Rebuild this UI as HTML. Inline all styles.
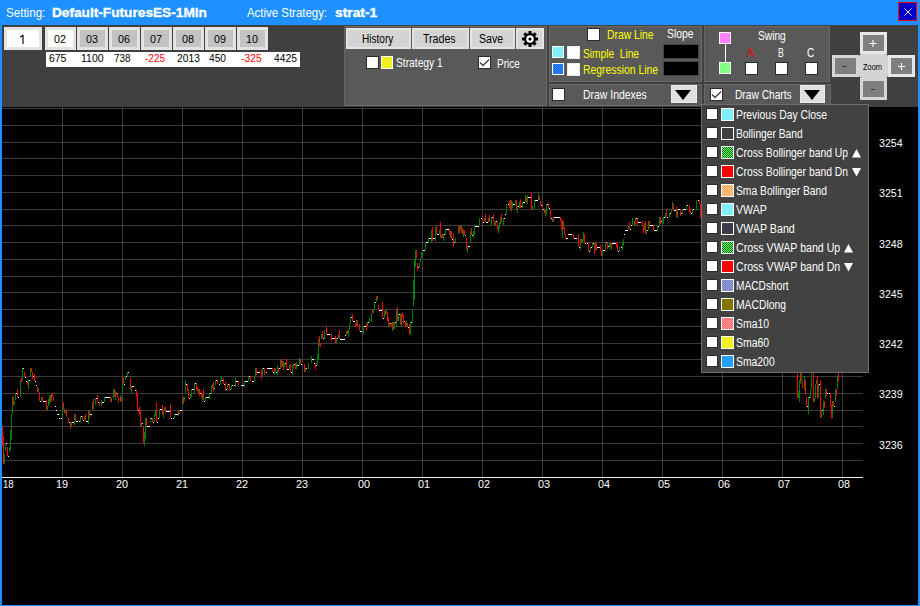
<!DOCTYPE html>
<html><head><meta charset="utf-8">
<style>
*{box-sizing:border-box}
html,body{margin:0;padding:0}
body{width:920px;height:606px;overflow:hidden;position:relative;background:#1e90ff;font-family:"Liberation Sans",sans-serif;}
.a{position:absolute}
.t{position:absolute;white-space:nowrap;line-height:1}
#hdr{position:absolute;left:2px;top:25px;width:916px;height:82px;background:#404040}
#chart{position:absolute;left:2px;top:107px;width:916px;height:498px;background:#000}
.nb{position:absolute;top:27px;height:23px;width:31px;background:#c3c3c3;border:3px solid #e3e3e3;color:#000;font-size:12px;text-align:center;line-height:17px}
.pn{position:absolute;background:#595959;border:1px solid #686868}
.btn{position:absolute;background:#d4d4d4;border:2px solid #e4e4e4;color:#000;font-size:13px;text-align:center;line-height:17px}
.cb{position:absolute;width:13px;height:13px;background:#fff;border:1px solid #2a2a2a}
.sw{position:absolute;width:13px;height:13px;border:1px solid #fff}
.dd{position:absolute;background:#e0e0e0;border:1px solid #ececec}
.dd:after{content:"";position:absolute;left:2.8px;top:3.9px;border-left:8.7px solid transparent;border-right:8.7px solid transparent;border-top:10.3px solid #000}
.xl{position:absolute;top:479px;width:30px;text-align:center;color:#fff;font-size:11px;line-height:11px}
.yl{position:absolute;left:879px;color:#fff;font-size:11px;line-height:14px}
.row{position:absolute;left:0;height:19px;width:168px}
.row .cb{left:4px;top:3px;width:12px;height:12px}
.row .sw{left:19px;top:3px;width:13px;height:13px}
.row .t{left:35px;top:6px;color:#fff;font-size:11.5px}
.zb{position:absolute;background:#7f7f7f;border:3px solid #e6e6e6;color:#fff;font-size:12px;text-align:center;line-height:15px}
</style></head><body>
<!-- title -->
<div class="a" style="left:898px;top:2px;width:19px;height:19px;background:#0000c8;border:1px solid #ff0000">
<svg width="17" height="17" style="position:absolute;left:0;top:0"><path d="M5.5 5.5L12.5 12.5M12.5 5.5L5.5 12.5" stroke="#fff" stroke-width="0.9"/></svg></div>

<div id="hdr"></div>
<div id="chart"></div>
<svg class="a" style="left:0;top:0" width="920" height="606"><rect x="2" y="108" width="861" height="1" fill="#505050" fill-opacity="0.75"/><rect x="2" y="125" width="861" height="1" fill="#505050" fill-opacity="0.75"/><rect x="2" y="142" width="861" height="1" fill="#505050" fill-opacity="0.75"/><rect x="2" y="158" width="861" height="1" fill="#505050" fill-opacity="0.75"/><rect x="2" y="175" width="861" height="1" fill="#505050" fill-opacity="0.75"/><rect x="2" y="192" width="861" height="1" fill="#505050" fill-opacity="0.75"/><rect x="2" y="209" width="861" height="1" fill="#505050" fill-opacity="0.75"/><rect x="2" y="225" width="861" height="1" fill="#505050" fill-opacity="0.75"/><rect x="2" y="242" width="861" height="1" fill="#505050" fill-opacity="0.75"/><rect x="2" y="259" width="861" height="1" fill="#505050" fill-opacity="0.75"/><rect x="2" y="276" width="861" height="1" fill="#505050" fill-opacity="0.75"/><rect x="2" y="292" width="861" height="1" fill="#505050" fill-opacity="0.75"/><rect x="2" y="309" width="861" height="1" fill="#505050" fill-opacity="0.75"/><rect x="2" y="326" width="861" height="1" fill="#505050" fill-opacity="0.75"/><rect x="2" y="343" width="861" height="1" fill="#505050" fill-opacity="0.75"/><rect x="2" y="359" width="861" height="1" fill="#505050" fill-opacity="0.75"/><rect x="2" y="376" width="861" height="1" fill="#505050" fill-opacity="0.75"/><rect x="2" y="393" width="861" height="1" fill="#505050" fill-opacity="0.75"/><rect x="2" y="410" width="861" height="1" fill="#505050" fill-opacity="0.75"/><rect x="2" y="426" width="861" height="1" fill="#505050" fill-opacity="0.75"/><rect x="2" y="443" width="861" height="1" fill="#505050" fill-opacity="0.75"/><rect x="2" y="460" width="861" height="1" fill="#505050" fill-opacity="0.75"/><rect x="62" y="107" width="1" height="370" fill="#505050" fill-opacity="0.75"/><rect x="122" y="107" width="1" height="370" fill="#505050" fill-opacity="0.75"/><rect x="182" y="107" width="1" height="370" fill="#505050" fill-opacity="0.75"/><rect x="242" y="107" width="1" height="370" fill="#505050" fill-opacity="0.75"/><rect x="302" y="107" width="1" height="370" fill="#505050" fill-opacity="0.75"/><rect x="362" y="107" width="1" height="370" fill="#505050" fill-opacity="0.75"/><rect x="422" y="107" width="1" height="370" fill="#505050" fill-opacity="0.75"/><rect x="482" y="107" width="1" height="370" fill="#505050" fill-opacity="0.75"/><rect x="542" y="107" width="1" height="370" fill="#505050" fill-opacity="0.75"/><rect x="602" y="107" width="1" height="370" fill="#505050" fill-opacity="0.75"/><rect x="662" y="107" width="1" height="370" fill="#505050" fill-opacity="0.75"/><rect x="722" y="107" width="1" height="370" fill="#505050" fill-opacity="0.75"/><rect x="782" y="107" width="1" height="370" fill="#505050" fill-opacity="0.75"/><rect x="842" y="107" width="1" height="370" fill="#505050" fill-opacity="0.75"/><rect x="2" y="477" width="861" height="1" fill="#f0f0f0"/><rect x="2" y="426" width="1" height="20" fill="#ff0000"/><rect x="3" y="436" width="1" height="28" fill="#ff0000"/><rect x="4" y="454" width="1" height="10" fill="#008000"/><rect x="5" y="443" width="1" height="8" fill="#008000"/><rect x="6" y="443" width="1" height="1" fill="#ffffff"/><rect x="7" y="447" width="1" height="9" fill="#ff0000"/><rect x="8" y="456" width="1" height="1" fill="#ffffff"/><rect x="9" y="447" width="1" height="5" fill="#008000"/><rect x="10" y="430" width="1" height="20" fill="#008000"/><rect x="11" y="414" width="1" height="26" fill="#008000"/><rect x="12" y="397" width="1" height="17" fill="#008000"/><rect x="13" y="397" width="1" height="8" fill="#ff0000"/><rect x="14" y="401" width="1" height="4" fill="#008000"/><rect x="15" y="393" width="1" height="7" fill="#008000"/><rect x="16" y="393" width="1" height="1" fill="#ffffff"/><rect x="17" y="389" width="1" height="8" fill="#ff0000"/><rect x="18" y="397" width="1" height="1" fill="#ffffff"/><rect x="20" y="380" width="1" height="17" fill="#008000"/><rect x="21" y="378" width="1" height="4" fill="#ff0000"/><rect x="22" y="368" width="1" height="12" fill="#008000"/><rect x="23" y="368" width="1" height="1" fill="#ffffff"/><rect x="24" y="372" width="1" height="5" fill="#ff0000"/><rect x="25" y="377" width="1" height="1" fill="#ffffff"/><rect x="26" y="381" width="1" height="1" fill="#ffffff"/><rect x="27" y="381" width="1" height="4" fill="#ff0000"/><rect x="28" y="380" width="1" height="9" fill="#008000"/><rect x="29" y="380" width="1" height="1" fill="#ffffff"/><rect x="30" y="368" width="1" height="8" fill="#008000"/><rect x="31" y="368" width="1" height="4" fill="#ff0000"/><rect x="32" y="372" width="1" height="7" fill="#ff0000"/><rect x="33" y="376" width="1" height="1" fill="#ffffff"/><rect x="34" y="374" width="1" height="7" fill="#ff0000"/><rect x="35" y="381" width="1" height="1" fill="#ffffff"/><rect x="36" y="385" width="1" height="1" fill="#ffffff"/><rect x="37" y="387" width="1" height="5" fill="#ff0000"/><rect x="38" y="388" width="1" height="4" fill="#008000"/><rect x="39" y="392" width="1" height="9" fill="#ff0000"/><rect x="40" y="401" width="1" height="1" fill="#ffffff"/><rect x="41" y="397" width="1" height="4" fill="#008000"/><rect x="42" y="397" width="1" height="4" fill="#ff0000"/><rect x="43" y="401" width="1" height="1" fill="#ffffff"/><rect x="44" y="401" width="1" height="1" fill="#ffffff"/><rect x="45" y="401" width="1" height="1" fill="#ffffff"/><rect x="46" y="400" width="1" height="10" fill="#ff0000"/><rect x="47" y="406" width="1" height="4" fill="#008000"/><rect x="48" y="399" width="1" height="7" fill="#008000"/><rect x="49" y="395" width="1" height="9" fill="#008000"/><rect x="50" y="395" width="1" height="7" fill="#ff0000"/><rect x="51" y="393" width="1" height="8" fill="#008000"/><rect x="52" y="393" width="1" height="4" fill="#ff0000"/><rect x="53" y="397" width="1" height="4" fill="#ff0000"/><rect x="55" y="406" width="1" height="1" fill="#ffffff"/><rect x="56" y="410" width="1" height="1" fill="#ffffff"/><rect x="57" y="414" width="1" height="1" fill="#ffffff"/><rect x="58" y="414" width="1" height="1" fill="#ffffff"/><rect x="59" y="418" width="1" height="1" fill="#ffffff"/><rect x="61" y="418" width="1" height="1" fill="#ffffff"/><rect x="62" y="405" width="1" height="13" fill="#008000"/><rect x="63" y="402" width="1" height="7" fill="#ff0000"/><rect x="64" y="409" width="1" height="4" fill="#ff0000"/><rect x="65" y="410" width="1" height="4" fill="#008000"/><rect x="66" y="410" width="1" height="7" fill="#ff0000"/><rect x="68" y="418" width="1" height="4" fill="#ff0000"/><rect x="69" y="422" width="1" height="1" fill="#ffffff"/><rect x="70" y="422" width="1" height="7" fill="#ff0000"/><rect x="71" y="422" width="1" height="4" fill="#008000"/><rect x="72" y="422" width="1" height="1" fill="#ffffff"/><rect x="73" y="422" width="1" height="1" fill="#ffffff"/><rect x="74" y="414" width="1" height="11" fill="#008000"/><rect x="75" y="414" width="1" height="7" fill="#ff0000"/><rect x="76" y="421" width="1" height="1" fill="#ffffff"/><rect x="77" y="421" width="1" height="1" fill="#ffffff"/><rect x="79" y="421" width="1" height="1" fill="#ffffff"/><rect x="80" y="416" width="1" height="6" fill="#008000"/><rect x="81" y="416" width="1" height="1" fill="#ffffff"/><rect x="82" y="416" width="1" height="4" fill="#ff0000"/><rect x="83" y="420" width="1" height="1" fill="#ffffff"/><rect x="84" y="416" width="1" height="4" fill="#008000"/><rect x="85" y="414" width="1" height="7" fill="#ff0000"/><rect x="86" y="421" width="1" height="1" fill="#ffffff"/><rect x="87" y="421" width="1" height="1" fill="#ffffff"/><rect x="88" y="410" width="1" height="14" fill="#008000"/><rect x="89" y="410" width="1" height="8" fill="#ff0000"/><rect x="90" y="414" width="1" height="1" fill="#ffffff"/><rect x="91" y="414" width="1" height="1" fill="#ffffff"/><rect x="92" y="402" width="1" height="8" fill="#008000"/><rect x="93" y="399" width="1" height="10" fill="#ff0000"/><rect x="95" y="398" width="1" height="7" fill="#008000"/><rect x="96" y="398" width="1" height="1" fill="#ffffff"/><rect x="97" y="395" width="1" height="7" fill="#ff0000"/><rect x="98" y="402" width="1" height="1" fill="#ffffff"/><rect x="99" y="402" width="1" height="4" fill="#ff0000"/><rect x="101" y="400" width="1" height="6" fill="#008000"/><rect x="102" y="402" width="1" height="1" fill="#ffffff"/><rect x="103" y="402" width="1" height="1" fill="#ffffff"/><rect x="104" y="397" width="1" height="5" fill="#008000"/><rect x="105" y="397" width="1" height="1" fill="#ffffff"/><rect x="106" y="397" width="1" height="1" fill="#ffffff"/><rect x="107" y="397" width="1" height="1" fill="#ffffff"/><rect x="108" y="397" width="1" height="1" fill="#ffffff"/><rect x="109" y="397" width="1" height="1" fill="#ffffff"/><rect x="110" y="397" width="1" height="5" fill="#ff0000"/><rect x="111" y="398" width="1" height="4" fill="#008000"/><rect x="113" y="389" width="1" height="9" fill="#008000"/><rect x="114" y="389" width="1" height="8" fill="#ff0000"/><rect x="115" y="391" width="1" height="9" fill="#008000"/><rect x="116" y="393" width="1" height="1" fill="#ffffff"/><rect x="117" y="393" width="1" height="4" fill="#ff0000"/><rect x="118" y="397" width="1" height="5" fill="#ff0000"/><rect x="120" y="395" width="1" height="7" fill="#008000"/><rect x="121" y="397" width="1" height="4" fill="#ff0000"/><rect x="122" y="380" width="1" height="13" fill="#008000"/><rect x="123" y="377" width="1" height="7" fill="#ff0000"/><rect x="124" y="384" width="1" height="1" fill="#ffffff"/><rect x="125" y="376" width="1" height="4" fill="#008000"/><rect x="126" y="376" width="1" height="1" fill="#ffffff"/><rect x="127" y="372" width="1" height="4" fill="#008000"/><rect x="128" y="372" width="1" height="1" fill="#ffffff"/><rect x="130" y="378" width="1" height="12" fill="#ff0000"/><rect x="131" y="386" width="1" height="7" fill="#008000"/><rect x="132" y="386" width="1" height="1" fill="#ffffff"/><rect x="133" y="386" width="1" height="1" fill="#ffffff"/><rect x="135" y="390" width="1" height="1" fill="#ffffff"/><rect x="136" y="390" width="1" height="7" fill="#ff0000"/><rect x="137" y="394" width="1" height="16" fill="#ff0000"/><rect x="138" y="410" width="1" height="1" fill="#ffffff"/><rect x="139" y="407" width="1" height="7" fill="#ff0000"/><rect x="140" y="410" width="1" height="17" fill="#ff0000"/><rect x="141" y="423" width="1" height="4" fill="#008000"/><rect x="142" y="423" width="1" height="1" fill="#ffffff"/><rect x="143" y="427" width="1" height="16" fill="#ff0000"/><rect x="144" y="432" width="1" height="14" fill="#008000"/><rect x="145" y="418" width="1" height="21" fill="#008000"/><rect x="146" y="418" width="1" height="8" fill="#ff0000"/><rect x="147" y="426" width="1" height="1" fill="#ffffff"/><rect x="148" y="426" width="1" height="1" fill="#ffffff"/><rect x="149" y="426" width="1" height="1" fill="#ffffff"/><rect x="150" y="418" width="1" height="4" fill="#008000"/><rect x="151" y="418" width="1" height="1" fill="#ffffff"/><rect x="152" y="418" width="1" height="4" fill="#ff0000"/><rect x="153" y="422" width="1" height="1" fill="#ffffff"/><rect x="154" y="414" width="1" height="8" fill="#008000"/><rect x="155" y="410" width="1" height="6" fill="#008000"/><rect x="156" y="402" width="1" height="20" fill="#ff0000"/><rect x="157" y="422" width="1" height="1" fill="#ffffff"/><rect x="158" y="418" width="1" height="1" fill="#ffffff"/><rect x="159" y="409" width="1" height="9" fill="#008000"/><rect x="160" y="409" width="1" height="1" fill="#ffffff"/><rect x="161" y="409" width="1" height="1" fill="#ffffff"/><rect x="162" y="405" width="1" height="10" fill="#ff0000"/><rect x="163" y="411" width="1" height="7" fill="#008000"/><rect x="164" y="407" width="1" height="4" fill="#008000"/><rect x="165" y="407" width="1" height="6" fill="#ff0000"/><rect x="166" y="411" width="1" height="1" fill="#ffffff"/><rect x="167" y="411" width="1" height="1" fill="#ffffff"/><rect x="168" y="411" width="1" height="1" fill="#ffffff"/><rect x="169" y="411" width="1" height="1" fill="#ffffff"/><rect x="170" y="404" width="1" height="14" fill="#ff0000"/><rect x="171" y="418" width="1" height="1" fill="#ffffff"/><rect x="173" y="418" width="1" height="1" fill="#ffffff"/><rect x="174" y="414" width="1" height="4" fill="#008000"/><rect x="175" y="414" width="1" height="1" fill="#ffffff"/><rect x="176" y="414" width="1" height="1" fill="#ffffff"/><rect x="177" y="414" width="1" height="1" fill="#ffffff"/><rect x="178" y="410" width="1" height="6" fill="#008000"/><rect x="179" y="410" width="1" height="4" fill="#ff0000"/><rect x="180" y="410" width="1" height="1" fill="#ffffff"/><rect x="181" y="410" width="1" height="1" fill="#ffffff"/><rect x="182" y="397" width="1" height="9" fill="#008000"/><rect x="183" y="397" width="1" height="7" fill="#ff0000"/><rect x="184" y="397" width="1" height="4" fill="#008000"/><rect x="185" y="380" width="1" height="13" fill="#008000"/><rect x="186" y="384" width="1" height="1" fill="#ffffff"/><rect x="187" y="384" width="1" height="7" fill="#ff0000"/><rect x="188" y="389" width="1" height="9" fill="#ff0000"/><rect x="189" y="398" width="1" height="1" fill="#ffffff"/><rect x="190" y="394" width="1" height="4" fill="#008000"/><rect x="191" y="389" width="1" height="8" fill="#008000"/><rect x="192" y="389" width="1" height="1" fill="#ffffff"/><rect x="193" y="389" width="1" height="1" fill="#ffffff"/><rect x="194" y="383" width="1" height="10" fill="#008000"/><rect x="195" y="383" width="1" height="1" fill="#ffffff"/><rect x="196" y="383" width="1" height="7" fill="#ff0000"/><rect x="197" y="387" width="1" height="4" fill="#ff0000"/><rect x="198" y="389" width="1" height="4" fill="#008000"/><rect x="199" y="389" width="1" height="7" fill="#ff0000"/><rect x="200" y="393" width="1" height="1" fill="#ffffff"/><rect x="201" y="391" width="1" height="6" fill="#ff0000"/><rect x="202" y="393" width="1" height="7" fill="#008000"/><rect x="203" y="389" width="1" height="12" fill="#ff0000"/><rect x="204" y="401" width="1" height="1" fill="#ffffff"/><rect x="205" y="397" width="1" height="4" fill="#008000"/><rect x="206" y="397" width="1" height="1" fill="#ffffff"/><rect x="207" y="397" width="1" height="1" fill="#ffffff"/><rect x="208" y="397" width="1" height="1" fill="#ffffff"/><rect x="209" y="393" width="1" height="6" fill="#008000"/><rect x="210" y="393" width="1" height="1" fill="#ffffff"/><rect x="211" y="386" width="1" height="7" fill="#008000"/><rect x="212" y="384" width="1" height="4" fill="#008000"/><rect x="213" y="382" width="1" height="9" fill="#ff0000"/><rect x="214" y="388" width="1" height="1" fill="#ffffff"/><rect x="215" y="380" width="1" height="5" fill="#008000"/><rect x="216" y="380" width="1" height="1" fill="#ffffff"/><rect x="217" y="380" width="1" height="4" fill="#ff0000"/><rect x="219" y="384" width="1" height="1" fill="#ffffff"/><rect x="220" y="380" width="1" height="4" fill="#008000"/><rect x="221" y="376" width="1" height="5" fill="#008000"/><rect x="222" y="380" width="1" height="1" fill="#ffffff"/><rect x="223" y="378" width="1" height="6" fill="#ff0000"/><rect x="224" y="384" width="1" height="1" fill="#ffffff"/><rect x="225" y="382" width="1" height="9" fill="#ff0000"/><rect x="226" y="389" width="1" height="1" fill="#ffffff"/><rect x="227" y="384" width="1" height="5" fill="#008000"/><rect x="228" y="384" width="1" height="1" fill="#ffffff"/><rect x="229" y="384" width="1" height="5" fill="#ff0000"/><rect x="230" y="389" width="1" height="1" fill="#ffffff"/><rect x="231" y="385" width="1" height="4" fill="#008000"/><rect x="232" y="385" width="1" height="1" fill="#ffffff"/><rect x="234" y="385" width="1" height="1" fill="#ffffff"/><rect x="235" y="378" width="1" height="9" fill="#008000"/><rect x="236" y="381" width="1" height="1" fill="#ffffff"/><rect x="237" y="381" width="1" height="1" fill="#ffffff"/><rect x="238" y="381" width="1" height="4" fill="#ff0000"/><rect x="241" y="385" width="1" height="1" fill="#ffffff"/><rect x="242" y="385" width="1" height="1" fill="#ffffff"/><rect x="243" y="385" width="1" height="1" fill="#ffffff"/><rect x="244" y="381" width="1" height="6" fill="#008000"/><rect x="245" y="381" width="1" height="1" fill="#ffffff"/><rect x="246" y="381" width="1" height="1" fill="#ffffff"/><rect x="247" y="381" width="1" height="1" fill="#ffffff"/><rect x="248" y="376" width="1" height="5" fill="#008000"/><rect x="249" y="376" width="1" height="1" fill="#ffffff"/><rect x="250" y="376" width="1" height="5" fill="#ff0000"/><rect x="252" y="381" width="1" height="1" fill="#ffffff"/><rect x="253" y="381" width="1" height="1" fill="#ffffff"/><rect x="254" y="376" width="1" height="5" fill="#008000"/><rect x="255" y="368" width="1" height="8" fill="#008000"/><rect x="256" y="368" width="1" height="7" fill="#ff0000"/><rect x="257" y="372" width="1" height="1" fill="#ffffff"/><rect x="258" y="372" width="1" height="1" fill="#ffffff"/><rect x="259" y="372" width="1" height="1" fill="#ffffff"/><rect x="261" y="370" width="1" height="9" fill="#ff0000"/><rect x="262" y="368" width="1" height="8" fill="#008000"/><rect x="263" y="368" width="1" height="1" fill="#ffffff"/><rect x="264" y="368" width="1" height="7" fill="#ff0000"/><rect x="266" y="372" width="1" height="1" fill="#ffffff"/><rect x="267" y="368" width="1" height="1" fill="#ffffff"/><rect x="268" y="368" width="1" height="1" fill="#ffffff"/><rect x="269" y="368" width="1" height="1" fill="#ffffff"/><rect x="270" y="368" width="1" height="1" fill="#ffffff"/><rect x="271" y="368" width="1" height="1" fill="#ffffff"/><rect x="272" y="368" width="1" height="4" fill="#ff0000"/><rect x="273" y="372" width="1" height="1" fill="#ffffff"/><rect x="274" y="368" width="1" height="7" fill="#008000"/><rect x="275" y="368" width="1" height="4" fill="#ff0000"/><rect x="276" y="372" width="1" height="1" fill="#ffffff"/><rect x="277" y="365" width="1" height="10" fill="#008000"/><rect x="278" y="368" width="1" height="4" fill="#ff0000"/><rect x="279" y="368" width="1" height="1" fill="#ffffff"/><rect x="280" y="359" width="1" height="10" fill="#008000"/><rect x="281" y="359" width="1" height="8" fill="#ff0000"/><rect x="282" y="361" width="1" height="6" fill="#008000"/><rect x="283" y="361" width="1" height="9" fill="#ff0000"/><rect x="284" y="363" width="1" height="4" fill="#008000"/><rect x="285" y="363" width="1" height="1" fill="#ffffff"/><rect x="286" y="359" width="1" height="10" fill="#ff0000"/><rect x="287" y="369" width="1" height="1" fill="#ffffff"/><rect x="288" y="369" width="1" height="1" fill="#ffffff"/><rect x="289" y="365" width="1" height="4" fill="#008000"/><rect x="290" y="364" width="1" height="8" fill="#ff0000"/><rect x="291" y="372" width="1" height="1" fill="#ffffff"/><rect x="292" y="365" width="1" height="10" fill="#008000"/><rect x="293" y="364" width="1" height="4" fill="#008000"/><rect x="294" y="364" width="1" height="1" fill="#ffffff"/><rect x="295" y="363" width="1" height="6" fill="#ff0000"/><rect x="296" y="362" width="1" height="7" fill="#008000"/><rect x="297" y="365" width="1" height="1" fill="#ffffff"/><rect x="298" y="365" width="1" height="1" fill="#ffffff"/><rect x="299" y="358" width="1" height="7" fill="#008000"/><rect x="300" y="359" width="1" height="5" fill="#ff0000"/><rect x="301" y="364" width="1" height="1" fill="#ffffff"/><rect x="304" y="364" width="1" height="8" fill="#ff0000"/><rect x="305" y="368" width="1" height="4" fill="#008000"/><rect x="306" y="368" width="1" height="1" fill="#ffffff"/><rect x="308" y="363" width="1" height="6" fill="#008000"/><rect x="311" y="356" width="1" height="7" fill="#008000"/><rect x="312" y="359" width="1" height="1" fill="#ffffff"/><rect x="313" y="359" width="1" height="1" fill="#ffffff"/><rect x="314" y="363" width="1" height="1" fill="#ffffff"/><rect x="315" y="363" width="1" height="6" fill="#ff0000"/><rect x="316" y="365" width="1" height="1" fill="#ffffff"/><rect x="317" y="354" width="1" height="11" fill="#008000"/><rect x="318" y="339" width="1" height="21" fill="#008000"/><rect x="319" y="336" width="1" height="10" fill="#ff0000"/><rect x="320" y="343" width="1" height="4" fill="#ff0000"/><rect x="321" y="334" width="1" height="5" fill="#008000"/><rect x="322" y="331" width="1" height="7" fill="#ff0000"/><rect x="323" y="338" width="1" height="1" fill="#ffffff"/><rect x="324" y="330" width="1" height="9" fill="#008000"/><rect x="326" y="327" width="1" height="7" fill="#ff0000"/><rect x="327" y="334" width="1" height="1" fill="#ffffff"/><rect x="328" y="334" width="1" height="1" fill="#ffffff"/><rect x="329" y="334" width="1" height="1" fill="#ffffff"/><rect x="331" y="334" width="1" height="7" fill="#ff0000"/><rect x="332" y="338" width="1" height="1" fill="#ffffff"/><rect x="333" y="338" width="1" height="1" fill="#ffffff"/><rect x="334" y="338" width="1" height="1" fill="#ffffff"/><rect x="335" y="336" width="1" height="7" fill="#ff0000"/><rect x="336" y="338" width="1" height="5" fill="#008000"/><rect x="337" y="338" width="1" height="1" fill="#ffffff"/><rect x="338" y="334" width="1" height="4" fill="#008000"/><rect x="339" y="330" width="1" height="9" fill="#ff0000"/><rect x="340" y="339" width="1" height="1" fill="#ffffff"/><rect x="341" y="339" width="1" height="1" fill="#ffffff"/><rect x="342" y="339" width="1" height="1" fill="#ffffff"/><rect x="343" y="339" width="1" height="1" fill="#ffffff"/><rect x="344" y="339" width="1" height="1" fill="#ffffff"/><rect x="345" y="335" width="1" height="1" fill="#ffffff"/><rect x="346" y="331" width="1" height="4" fill="#008000"/><rect x="347" y="330" width="1" height="4" fill="#ff0000"/><rect x="348" y="330" width="1" height="7" fill="#008000"/><rect x="349" y="323" width="1" height="7" fill="#008000"/><rect x="350" y="317" width="1" height="6" fill="#008000"/><rect x="351" y="317" width="1" height="1" fill="#ffffff"/><rect x="352" y="314" width="1" height="7" fill="#ff0000"/><rect x="353" y="321" width="1" height="1" fill="#ffffff"/><rect x="354" y="321" width="1" height="1" fill="#ffffff"/><rect x="355" y="323" width="1" height="4" fill="#ff0000"/><rect x="356" y="320" width="1" height="7" fill="#008000"/><rect x="357" y="320" width="1" height="7" fill="#ff0000"/><rect x="359" y="324" width="1" height="7" fill="#ff0000"/><rect x="360" y="331" width="1" height="1" fill="#ffffff"/><rect x="361" y="331" width="1" height="1" fill="#ffffff"/><rect x="363" y="326" width="1" height="8" fill="#008000"/><rect x="364" y="326" width="1" height="1" fill="#ffffff"/><rect x="365" y="326" width="1" height="1" fill="#ffffff"/><rect x="366" y="323" width="1" height="7" fill="#ff0000"/><rect x="367" y="322" width="1" height="5" fill="#008000"/><rect x="368" y="322" width="1" height="1" fill="#ffffff"/><rect x="369" y="318" width="1" height="4" fill="#008000"/><rect x="371" y="313" width="1" height="9" fill="#008000"/><rect x="372" y="309" width="1" height="4" fill="#008000"/><rect x="373" y="309" width="1" height="4" fill="#ff0000"/><rect x="374" y="302" width="1" height="8" fill="#008000"/><rect x="375" y="302" width="1" height="1" fill="#ffffff"/><rect x="376" y="296" width="1" height="6" fill="#008000"/><rect x="377" y="296" width="1" height="4" fill="#ff0000"/><rect x="378" y="305" width="1" height="5" fill="#ff0000"/><rect x="379" y="310" width="1" height="1" fill="#ffffff"/><rect x="380" y="310" width="1" height="1" fill="#ffffff"/><rect x="381" y="310" width="1" height="1" fill="#ffffff"/><rect x="382" y="302" width="1" height="16" fill="#ff0000"/><rect x="383" y="318" width="1" height="1" fill="#ffffff"/><rect x="384" y="311" width="1" height="7" fill="#008000"/><rect x="385" y="310" width="1" height="5" fill="#008000"/><rect x="386" y="310" width="1" height="4" fill="#ff0000"/><rect x="387" y="312" width="1" height="9" fill="#ff0000"/><rect x="388" y="317" width="1" height="10" fill="#ff0000"/><rect x="389" y="323" width="1" height="4" fill="#008000"/><rect x="390" y="323" width="1" height="1" fill="#ffffff"/><rect x="391" y="323" width="1" height="4" fill="#ff0000"/><rect x="392" y="322" width="1" height="9" fill="#008000"/><rect x="393" y="322" width="1" height="7" fill="#ff0000"/><rect x="394" y="322" width="1" height="7" fill="#008000"/><rect x="395" y="322" width="1" height="1" fill="#ffffff"/><rect x="396" y="310" width="1" height="17" fill="#008000"/><rect x="397" y="307" width="1" height="14" fill="#ff0000"/><rect x="398" y="314" width="1" height="7" fill="#008000"/><rect x="399" y="314" width="1" height="1" fill="#ffffff"/><rect x="400" y="314" width="1" height="11" fill="#ff0000"/><rect x="401" y="313" width="1" height="14" fill="#008000"/><rect x="402" y="313" width="1" height="4" fill="#ff0000"/><rect x="403" y="315" width="1" height="9" fill="#ff0000"/><rect x="404" y="321" width="1" height="1" fill="#ffffff"/><rect x="405" y="322" width="1" height="5" fill="#ff0000"/><rect x="406" y="320" width="1" height="7" fill="#008000"/><rect x="407" y="323" width="1" height="4" fill="#ff0000"/><rect x="408" y="327" width="1" height="1" fill="#ffffff"/><rect x="409" y="324" width="1" height="10" fill="#ff0000"/><rect x="410" y="322" width="1" height="13" fill="#008000"/><rect x="411" y="322" width="1" height="1" fill="#ffffff"/><rect x="412" y="310" width="1" height="13" fill="#008000"/><rect x="413" y="280" width="1" height="26" fill="#008000"/><rect x="414" y="259" width="1" height="41" fill="#008000"/><rect x="415" y="250" width="1" height="17" fill="#008000"/><rect x="416" y="250" width="1" height="8" fill="#ff0000"/><rect x="417" y="263" width="1" height="8" fill="#ff0000"/><rect x="418" y="267" width="1" height="1" fill="#ffffff"/><rect x="419" y="263" width="1" height="4" fill="#008000"/><rect x="420" y="258" width="1" height="5" fill="#008000"/><rect x="421" y="252" width="1" height="6" fill="#008000"/><rect x="422" y="250" width="1" height="5" fill="#008000"/><rect x="423" y="250" width="1" height="1" fill="#ffffff"/><rect x="424" y="250" width="1" height="1" fill="#ffffff"/><rect x="425" y="242" width="1" height="8" fill="#008000"/><rect x="426" y="242" width="1" height="1" fill="#ffffff"/><rect x="427" y="242" width="1" height="1" fill="#ffffff"/><rect x="428" y="238" width="1" height="5" fill="#008000"/><rect x="429" y="238" width="1" height="1" fill="#ffffff"/><rect x="430" y="238" width="1" height="1" fill="#ffffff"/><rect x="431" y="230" width="1" height="12" fill="#008000"/><rect x="432" y="227" width="1" height="14" fill="#ff0000"/><rect x="433" y="238" width="1" height="1" fill="#ffffff"/><rect x="434" y="238" width="1" height="1" fill="#ffffff"/><rect x="435" y="227" width="1" height="14" fill="#008000"/><rect x="436" y="226" width="1" height="8" fill="#ff0000"/><rect x="437" y="234" width="1" height="1" fill="#ffffff"/><rect x="438" y="234" width="1" height="1" fill="#ffffff"/><rect x="439" y="230" width="1" height="4" fill="#008000"/><rect x="440" y="222" width="1" height="16" fill="#ff0000"/><rect x="441" y="234" width="1" height="4" fill="#008000"/><rect x="442" y="234" width="1" height="4" fill="#ff0000"/><rect x="443" y="234" width="1" height="7" fill="#008000"/><rect x="444" y="234" width="1" height="1" fill="#ffffff"/><rect x="445" y="229" width="1" height="6" fill="#008000"/><rect x="446" y="229" width="1" height="1" fill="#ffffff"/><rect x="447" y="229" width="1" height="1" fill="#ffffff"/><rect x="448" y="229" width="1" height="1" fill="#ffffff"/><rect x="449" y="229" width="1" height="6" fill="#ff0000"/><rect x="450" y="231" width="1" height="7" fill="#008000"/><rect x="451" y="231" width="1" height="8" fill="#ff0000"/><rect x="452" y="239" width="1" height="1" fill="#ffffff"/><rect x="453" y="234" width="1" height="12" fill="#ff0000"/><rect x="454" y="242" width="1" height="1" fill="#ffffff"/><rect x="455" y="238" width="1" height="4" fill="#008000"/><rect x="458" y="226" width="1" height="8" fill="#008000"/><rect x="459" y="226" width="1" height="7" fill="#ff0000"/><rect x="460" y="226" width="1" height="4" fill="#008000"/><rect x="461" y="226" width="1" height="7" fill="#ff0000"/><rect x="462" y="228" width="1" height="6" fill="#ff0000"/><rect x="463" y="230" width="1" height="7" fill="#008000"/><rect x="464" y="230" width="1" height="5" fill="#ff0000"/><rect x="465" y="235" width="1" height="1" fill="#ffffff"/><rect x="466" y="238" width="1" height="12" fill="#ff0000"/><rect x="467" y="246" width="1" height="7" fill="#008000"/><rect x="468" y="246" width="1" height="1" fill="#ffffff"/><rect x="469" y="246" width="1" height="1" fill="#ffffff"/><rect x="470" y="231" width="1" height="11" fill="#008000"/><rect x="471" y="228" width="1" height="7" fill="#ff0000"/><rect x="472" y="235" width="1" height="1" fill="#ffffff"/><rect x="473" y="231" width="1" height="7" fill="#008000"/><rect x="474" y="226" width="1" height="9" fill="#008000"/><rect x="475" y="226" width="1" height="1" fill="#ffffff"/><rect x="476" y="226" width="1" height="1" fill="#ffffff"/><rect x="477" y="226" width="1" height="1" fill="#ffffff"/><rect x="478" y="226" width="1" height="1" fill="#ffffff"/><rect x="479" y="218" width="1" height="8" fill="#008000"/><rect x="481" y="218" width="1" height="1" fill="#ffffff"/><rect x="482" y="218" width="1" height="4" fill="#ff0000"/><rect x="483" y="222" width="1" height="1" fill="#ffffff"/><rect x="484" y="218" width="1" height="4" fill="#008000"/><rect x="485" y="214" width="1" height="8" fill="#ff0000"/><rect x="486" y="222" width="1" height="1" fill="#ffffff"/><rect x="487" y="222" width="1" height="1" fill="#ffffff"/><rect x="488" y="218" width="1" height="4" fill="#008000"/><rect x="489" y="215" width="1" height="7" fill="#ff0000"/><rect x="491" y="217" width="1" height="9" fill="#008000"/><rect x="492" y="217" width="1" height="1" fill="#ffffff"/><rect x="493" y="214" width="1" height="7" fill="#ff0000"/><rect x="494" y="221" width="1" height="4" fill="#ff0000"/><rect x="495" y="221" width="1" height="4" fill="#008000"/><rect x="496" y="221" width="1" height="1" fill="#ffffff"/><rect x="497" y="222" width="1" height="8" fill="#ff0000"/><rect x="498" y="226" width="1" height="7" fill="#008000"/><rect x="499" y="222" width="1" height="6" fill="#008000"/><rect x="500" y="217" width="1" height="7" fill="#008000"/><rect x="501" y="214" width="1" height="8" fill="#ff0000"/><rect x="503" y="218" width="1" height="7" fill="#008000"/><rect x="504" y="218" width="1" height="1" fill="#ffffff"/><rect x="505" y="214" width="1" height="1" fill="#ffffff"/><rect x="506" y="204" width="1" height="10" fill="#008000"/><rect x="508" y="204" width="1" height="1" fill="#ffffff"/><rect x="509" y="201" width="1" height="7" fill="#ff0000"/><rect x="510" y="200" width="1" height="10" fill="#008000"/><rect x="511" y="200" width="1" height="11" fill="#ff0000"/><rect x="512" y="202" width="1" height="6" fill="#008000"/><rect x="513" y="204" width="1" height="1" fill="#ffffff"/><rect x="514" y="204" width="1" height="1" fill="#ffffff"/><rect x="515" y="200" width="1" height="4" fill="#008000"/><rect x="516" y="200" width="1" height="10" fill="#ff0000"/><rect x="517" y="206" width="1" height="7" fill="#008000"/><rect x="518" y="206" width="1" height="1" fill="#ffffff"/><rect x="519" y="202" width="1" height="6" fill="#008000"/><rect x="520" y="199" width="1" height="9" fill="#ff0000"/><rect x="521" y="206" width="1" height="1" fill="#ffffff"/><rect x="522" y="202" width="1" height="6" fill="#008000"/><rect x="523" y="202" width="1" height="1" fill="#ffffff"/><rect x="524" y="202" width="1" height="1" fill="#ffffff"/><rect x="525" y="195" width="1" height="7" fill="#008000"/><rect x="526" y="197" width="1" height="5" fill="#ff0000"/><rect x="527" y="195" width="1" height="9" fill="#008000"/><rect x="528" y="197" width="1" height="1" fill="#ffffff"/><rect x="529" y="197" width="1" height="1" fill="#ffffff"/><rect x="530" y="197" width="1" height="1" fill="#ffffff"/><rect x="531" y="192" width="1" height="18" fill="#ff0000"/><rect x="532" y="206" width="1" height="4" fill="#008000"/><rect x="534" y="200" width="1" height="10" fill="#008000"/><rect x="535" y="200" width="1" height="1" fill="#ffffff"/><rect x="536" y="200" width="1" height="1" fill="#ffffff"/><rect x="537" y="200" width="1" height="1" fill="#ffffff"/><rect x="538" y="193" width="1" height="7" fill="#008000"/><rect x="539" y="196" width="1" height="4" fill="#ff0000"/><rect x="540" y="201" width="1" height="4" fill="#ff0000"/><rect x="541" y="205" width="1" height="1" fill="#ffffff"/><rect x="542" y="205" width="1" height="4" fill="#ff0000"/><rect x="543" y="209" width="1" height="1" fill="#ffffff"/><rect x="544" y="209" width="1" height="4" fill="#ff0000"/><rect x="545" y="209" width="1" height="7" fill="#008000"/><rect x="546" y="204" width="1" height="10" fill="#008000"/><rect x="547" y="204" width="1" height="1" fill="#ffffff"/><rect x="548" y="204" width="1" height="4" fill="#ff0000"/><rect x="549" y="208" width="1" height="1" fill="#ffffff"/><rect x="550" y="210" width="1" height="8" fill="#ff0000"/><rect x="551" y="218" width="1" height="1" fill="#ffffff"/><rect x="552" y="218" width="1" height="4" fill="#ff0000"/><rect x="553" y="217" width="1" height="5" fill="#008000"/><rect x="554" y="217" width="1" height="1" fill="#ffffff"/><rect x="555" y="217" width="1" height="1" fill="#ffffff"/><rect x="556" y="217" width="1" height="1" fill="#ffffff"/><rect x="557" y="217" width="1" height="1" fill="#ffffff"/><rect x="558" y="217" width="1" height="1" fill="#ffffff"/><rect x="559" y="217" width="1" height="1" fill="#ffffff"/><rect x="560" y="217" width="1" height="4" fill="#ff0000"/><rect x="561" y="219" width="1" height="11" fill="#ff0000"/><rect x="562" y="221" width="1" height="17" fill="#008000"/><rect x="563" y="221" width="1" height="8" fill="#ff0000"/><rect x="564" y="227" width="1" height="7" fill="#ff0000"/><rect x="565" y="234" width="1" height="4" fill="#ff0000"/><rect x="566" y="238" width="1" height="1" fill="#ffffff"/><rect x="567" y="238" width="1" height="1" fill="#ffffff"/><rect x="568" y="234" width="1" height="1" fill="#ffffff"/><rect x="569" y="234" width="1" height="1" fill="#ffffff"/><rect x="570" y="234" width="1" height="1" fill="#ffffff"/><rect x="571" y="234" width="1" height="1" fill="#ffffff"/><rect x="573" y="234" width="1" height="4" fill="#ff0000"/><rect x="574" y="238" width="1" height="1" fill="#ffffff"/><rect x="575" y="238" width="1" height="1" fill="#ffffff"/><rect x="576" y="238" width="1" height="1" fill="#ffffff"/><rect x="578" y="234" width="1" height="13" fill="#ff0000"/><rect x="579" y="247" width="1" height="1" fill="#ffffff"/><rect x="580" y="239" width="1" height="11" fill="#008000"/><rect x="581" y="239" width="1" height="4" fill="#ff0000"/><rect x="582" y="239" width="1" height="4" fill="#008000"/><rect x="583" y="232" width="1" height="9" fill="#008000"/><rect x="584" y="234" width="1" height="9" fill="#ff0000"/><rect x="585" y="243" width="1" height="1" fill="#ffffff"/><rect x="587" y="243" width="1" height="1" fill="#ffffff"/><rect x="588" y="243" width="1" height="8" fill="#ff0000"/><rect x="589" y="251" width="1" height="1" fill="#ffffff"/><rect x="590" y="247" width="1" height="4" fill="#008000"/><rect x="591" y="247" width="1" height="1" fill="#ffffff"/><rect x="592" y="243" width="1" height="4" fill="#008000"/><rect x="593" y="243" width="1" height="1" fill="#ffffff"/><rect x="594" y="243" width="1" height="11" fill="#ff0000"/><rect x="595" y="243" width="1" height="8" fill="#008000"/><rect x="596" y="243" width="1" height="7" fill="#ff0000"/><rect x="597" y="247" width="1" height="1" fill="#ffffff"/><rect x="598" y="247" width="1" height="1" fill="#ffffff"/><rect x="599" y="247" width="1" height="1" fill="#ffffff"/><rect x="600" y="245" width="1" height="6" fill="#ff0000"/><rect x="601" y="251" width="1" height="5" fill="#ff0000"/><rect x="602" y="250" width="1" height="6" fill="#008000"/><rect x="603" y="250" width="1" height="1" fill="#ffffff"/><rect x="604" y="250" width="1" height="1" fill="#ffffff"/><rect x="605" y="242" width="1" height="8" fill="#008000"/><rect x="606" y="242" width="1" height="1" fill="#ffffff"/><rect x="607" y="242" width="1" height="7" fill="#ff0000"/><rect x="608" y="246" width="1" height="1" fill="#ffffff"/><rect x="609" y="242" width="1" height="7" fill="#008000"/><rect x="610" y="242" width="1" height="5" fill="#ff0000"/><rect x="611" y="243" width="1" height="7" fill="#008000"/><rect x="612" y="243" width="1" height="1" fill="#ffffff"/><rect x="613" y="243" width="1" height="1" fill="#ffffff"/><rect x="614" y="243" width="1" height="1" fill="#ffffff"/><rect x="615" y="243" width="1" height="1" fill="#ffffff"/><rect x="616" y="243" width="1" height="4" fill="#ff0000"/><rect x="617" y="244" width="1" height="7" fill="#ff0000"/><rect x="618" y="251" width="1" height="1" fill="#ffffff"/><rect x="619" y="247" width="1" height="4" fill="#008000"/><rect x="621" y="247" width="1" height="1" fill="#ffffff"/><rect x="622" y="243" width="1" height="7" fill="#008000"/><rect x="623" y="239" width="1" height="6" fill="#008000"/><rect x="624" y="234" width="1" height="1" fill="#ffffff"/><rect x="625" y="230" width="1" height="1" fill="#ffffff"/><rect x="626" y="230" width="1" height="1" fill="#ffffff"/><rect x="627" y="230" width="1" height="1" fill="#ffffff"/><rect x="628" y="225" width="1" height="5" fill="#008000"/><rect x="629" y="222" width="1" height="7" fill="#ff0000"/><rect x="630" y="229" width="1" height="1" fill="#ffffff"/><rect x="631" y="225" width="1" height="1" fill="#ffffff"/><rect x="632" y="218" width="1" height="7" fill="#008000"/><rect x="634" y="221" width="1" height="4" fill="#ff0000"/><rect x="635" y="218" width="1" height="8" fill="#008000"/><rect x="636" y="218" width="1" height="1" fill="#ffffff"/><rect x="637" y="218" width="1" height="7" fill="#ff0000"/><rect x="638" y="222" width="1" height="1" fill="#ffffff"/><rect x="639" y="222" width="1" height="1" fill="#ffffff"/><rect x="640" y="222" width="1" height="1" fill="#ffffff"/><rect x="642" y="221" width="1" height="5" fill="#ff0000"/><rect x="643" y="226" width="1" height="7" fill="#ff0000"/><rect x="644" y="223" width="1" height="7" fill="#008000"/><rect x="645" y="221" width="1" height="13" fill="#ff0000"/><rect x="646" y="230" width="1" height="4" fill="#008000"/><rect x="647" y="230" width="1" height="1" fill="#ffffff"/><rect x="648" y="221" width="1" height="9" fill="#008000"/><rect x="649" y="221" width="1" height="7" fill="#ff0000"/><rect x="650" y="225" width="1" height="1" fill="#ffffff"/><rect x="651" y="225" width="1" height="1" fill="#ffffff"/><rect x="652" y="225" width="1" height="1" fill="#ffffff"/><rect x="653" y="225" width="1" height="5" fill="#ff0000"/><rect x="654" y="230" width="1" height="1" fill="#ffffff"/><rect x="655" y="230" width="1" height="1" fill="#ffffff"/><rect x="656" y="230" width="1" height="1" fill="#ffffff"/><rect x="657" y="226" width="1" height="4" fill="#008000"/><rect x="658" y="226" width="1" height="1" fill="#ffffff"/><rect x="659" y="217" width="1" height="9" fill="#008000"/><rect x="660" y="217" width="1" height="7" fill="#ff0000"/><rect x="661" y="221" width="1" height="1" fill="#ffffff"/><rect x="663" y="217" width="1" height="7" fill="#008000"/><rect x="664" y="217" width="1" height="1" fill="#ffffff"/><rect x="665" y="213" width="1" height="5" fill="#008000"/><rect x="666" y="210" width="1" height="7" fill="#ff0000"/><rect x="667" y="217" width="1" height="1" fill="#ffffff"/><rect x="669" y="213" width="1" height="5" fill="#008000"/><rect x="670" y="213" width="1" height="1" fill="#ffffff"/><rect x="671" y="209" width="1" height="4" fill="#008000"/><rect x="672" y="202" width="1" height="7" fill="#008000"/><rect x="673" y="204" width="1" height="6" fill="#ff0000"/><rect x="674" y="210" width="1" height="1" fill="#ffffff"/><rect x="675" y="210" width="1" height="1" fill="#ffffff"/><rect x="676" y="207" width="1" height="10" fill="#ff0000"/><rect x="677" y="209" width="1" height="9" fill="#008000"/><rect x="678" y="209" width="1" height="1" fill="#ffffff"/><rect x="679" y="209" width="1" height="1" fill="#ffffff"/><rect x="680" y="209" width="1" height="7" fill="#ff0000"/><rect x="681" y="213" width="1" height="1" fill="#ffffff"/><rect x="682" y="209" width="1" height="5" fill="#008000"/><rect x="683" y="209" width="1" height="1" fill="#ffffff"/><rect x="684" y="209" width="1" height="1" fill="#ffffff"/><rect x="685" y="209" width="1" height="1" fill="#ffffff"/><rect x="686" y="205" width="1" height="4" fill="#008000"/><rect x="687" y="205" width="1" height="1" fill="#ffffff"/><rect x="689" y="205" width="1" height="7" fill="#ff0000"/><rect x="690" y="209" width="1" height="4" fill="#ff0000"/><rect x="691" y="213" width="1" height="1" fill="#ffffff"/><rect x="692" y="209" width="1" height="5" fill="#008000"/><rect x="693" y="209" width="1" height="1" fill="#ffffff"/><rect x="696" y="200" width="1" height="10" fill="#008000"/><rect x="698" y="200" width="1" height="1" fill="#ffffff"/><rect x="699" y="200" width="1" height="4" fill="#ff0000"/><rect x="700" y="204" width="1" height="14" fill="#ff0000"/><rect x="701" y="204" width="1" height="14" fill="#008000"/><rect x="797" y="373" width="1" height="25" fill="#ff0000"/><rect x="798" y="391" width="1" height="7" fill="#008000"/><rect x="799" y="380" width="1" height="22" fill="#008000"/><rect x="800" y="373" width="1" height="11" fill="#008000"/><rect x="801" y="373" width="1" height="8" fill="#ff0000"/><rect x="802" y="381" width="1" height="7" fill="#ff0000"/><rect x="804" y="376" width="1" height="14" fill="#008000"/><rect x="805" y="380" width="1" height="14" fill="#ff0000"/><rect x="806" y="397" width="1" height="9" fill="#ff0000"/><rect x="807" y="406" width="1" height="1" fill="#ffffff"/><rect x="808" y="397" width="1" height="17" fill="#008000"/><rect x="809" y="397" width="1" height="1" fill="#ffffff"/><rect x="810" y="389" width="1" height="9" fill="#008000"/><rect x="811" y="373" width="1" height="16" fill="#008000"/><rect x="813" y="373" width="1" height="29" fill="#ff0000"/><rect x="814" y="398" width="1" height="4" fill="#008000"/><rect x="815" y="384" width="1" height="14" fill="#008000"/><rect x="816" y="380" width="1" height="4" fill="#008000"/><rect x="817" y="376" width="1" height="22" fill="#ff0000"/><rect x="818" y="384" width="1" height="14" fill="#008000"/><rect x="819" y="384" width="1" height="1" fill="#ffffff"/><rect x="820" y="380" width="1" height="38" fill="#ff0000"/><rect x="821" y="410" width="1" height="8" fill="#008000"/><rect x="822" y="410" width="1" height="1" fill="#ffffff"/><rect x="823" y="401" width="1" height="14" fill="#008000"/><rect x="824" y="401" width="1" height="7" fill="#ff0000"/><rect x="825" y="389" width="1" height="9" fill="#008000"/><rect x="826" y="389" width="1" height="7" fill="#ff0000"/><rect x="827" y="393" width="1" height="1" fill="#ffffff"/><rect x="829" y="393" width="1" height="1" fill="#ffffff"/><rect x="830" y="393" width="1" height="13" fill="#ff0000"/><rect x="831" y="405" width="1" height="13" fill="#ff0000"/><rect x="832" y="401" width="1" height="17" fill="#008000"/><rect x="833" y="401" width="1" height="5" fill="#ff0000"/><rect x="834" y="406" width="1" height="1" fill="#ffffff"/><rect x="835" y="389" width="1" height="13" fill="#008000"/><rect x="836" y="389" width="1" height="7" fill="#ff0000"/><rect x="837" y="376" width="1" height="13" fill="#008000"/><rect x="838" y="373" width="1" height="8" fill="#ff0000"/></svg>



<!-- number buttons -->
<div class="nb" style="left:4px;width:38px;background:#fff"></div>
<div class="nb" style="left:45px;background:#fff"></div>
<div class="nb" style="left:77px"></div>
<div class="nb" style="left:109px"></div>
<div class="nb" style="left:141px"></div>
<div class="nb" style="left:173px"></div>
<div class="nb" style="left:205px"></div>
<div class="nb" style="left:237px"></div>
<div class="a" style="left:46px;top:52px;width:254px;height:15px;background:#fff"></div>

<!-- history panel -->
<div class="pn" style="left:344px;top:26px;width:203px;height:80px"></div>
<div class="btn" style="left:346px;top:28px;width:65px;height:21px"></div>
<div class="btn" style="left:412px;top:28px;width:57px;height:21px"></div>
<div class="btn" style="left:470px;top:28px;width:45px;height:21px"></div>
<div class="btn" style="left:516px;top:28px;width:28px;height:21px"></div>
<svg class="a" style="left:522px;top:30.5px" width="16" height="16"><g fill="#000"><rect x="6.5" y="0" width="3" height="4" transform="rotate(0 8 8)"/><rect x="6.5" y="0" width="3" height="4" transform="rotate(45 8 8)"/><rect x="6.5" y="0" width="3" height="4" transform="rotate(90 8 8)"/><rect x="6.5" y="0" width="3" height="4" transform="rotate(135 8 8)"/><rect x="6.5" y="0" width="3" height="4" transform="rotate(180 8 8)"/><rect x="6.5" y="0" width="3" height="4" transform="rotate(225 8 8)"/><rect x="6.5" y="0" width="3" height="4" transform="rotate(270 8 8)"/><rect x="6.5" y="0" width="3" height="4" transform="rotate(315 8 8)"/><circle cx="8" cy="8" r="6"/></g><circle cx="8" cy="8" r="3.8" fill="#fff"/><circle cx="8" cy="8" r="1.6" fill="#000"/></svg>
<div class="cb" style="left:366px;top:56px"></div>
<div class="sw" style="left:381px;top:56px;width:12px;height:13px;background:#f0f020"></div>
<div class="cb" style="left:478px;top:56px"></div><svg class="a" style="left:478px;top:56px" width="13" height="13"><path d="M2 6.5L5 9.5L11 3.5" stroke="#404040" stroke-width="1.4" fill="none"/></svg>

<!-- draw line panel -->
<div class="pn" style="left:549px;top:26px;width:153px;height:56px"></div>
<div class="pn" style="left:549px;top:84px;width:153px;height:22px"></div>
<div class="cb" style="left:587px;top:28px"></div>
<div class="sw" style="left:552px;top:46px;width:12px;height:12px;background:#80f0ff"></div>
<div class="cb" style="left:567px;top:46px;border:1px dotted #d8d8d8"></div>
<div class="sw" style="left:552px;top:63px;width:12px;height:12px;background:repeating-conic-gradient(#1060e0 0 25%,#3090ff 0 50%) 0 0/2px 2px"></div>
<div class="cb" style="left:567px;top:63px;border:1px dotted #d8d8d8"></div>
<div class="a" style="left:663px;top:44px;width:36px;height:15px;background:#000;border:1px solid #444"></div>
<div class="a" style="left:663px;top:61px;width:36px;height:15px;background:#000;border:1px solid #444"></div>
<div class="cb" style="left:552px;top:88px"></div>
<div class="dd" style="left:671px;top:85px;width:26px;height:18px"></div>

<!-- swing panel -->
<div class="pn" style="left:704px;top:26px;width:126px;height:56px"></div>
<div class="pn" style="left:704px;top:84px;width:127px;height:22px"></div>
<div class="a" style="left:725px;top:43px;width:1px;height:19px;background:#fff"></div>
<div class="sw" style="left:719px;top:32px;width:12px;height:12px;background:#ff80ff"></div>
<div class="sw" style="left:719px;top:62px;width:12px;height:12px;background:#80ff80"></div>
<div class="cb" style="left:745px;top:62px"></div>
<div class="cb" style="left:775px;top:62px"></div>
<div class="cb" style="left:805px;top:62px"></div>
<div class="cb" style="left:710px;top:88px"></div><svg class="a" style="left:710px;top:88px" width="13" height="13"><path d="M2 6.5L5 9.5L11 3.5" stroke="#404040" stroke-width="1.4" fill="none"/></svg>
<div class="dd" style="left:800px;top:85px;width:25px;height:18px"></div>

<!-- zoom -->
<div class="zb" style="left:860px;top:32px;width:27px;height:22px"></div>
<div class="zb" style="left:832px;top:55px;width:27px;height:22px;border:none;background:linear-gradient(#7f7f7f,#7f7f7f) 3px 3px/21px 16px no-repeat,repeating-conic-gradient(#e6e6e6 0 25%,#c4c4c4 0 50%) 0 0/2px 2px"></div>
<div class="zb" style="left:888px;top:55px;width:27px;height:22px"></div>
<div class="zb" style="left:860px;top:78px;width:27px;height:22px;border:none;background:linear-gradient(#7f7f7f,#7f7f7f) 3px 3px/21px 16px no-repeat,repeating-conic-gradient(#e6e6e6 0 25%,#c4c4c4 0 50%) 0 0/2px 2px"></div>
<div class="a" style="left:859px;top:54px;width:29px;height:24px;background:#d4d4d4;border-radius:3px"></div>
<svg class="a" style="left:860px;top:32px" width="27" height="22"><path d="M9.5 11.5H16.5M13 8V15" stroke="#fff" stroke-width="1.1"/></svg>
<svg class="a" style="left:888px;top:55px" width="27" height="22"><path d="M10 11.5H17M13.5 8V15" stroke="#fff" stroke-width="1.1"/></svg>
<svg class="a" style="left:832px;top:55px" width="27" height="22"><path d="M10.5 11.5H14.5" stroke="#333" stroke-width="1"/></svg>
<svg class="a" style="left:860px;top:78px" width="27" height="22"><path d="M11 11.5H15" stroke="#333" stroke-width="1"/></svg>

<!-- dropdown -->
<div class="a" style="left:701px;top:104px;width:168px;height:269px;background:#424242;border:1px solid #6e6e6e">
<div class="row" style="top:0px"><div class="cb"></div><div class="sw" style="background:#80f0ff"></div></div>
<div class="row" style="top:19px"><div class="cb"></div><div class="sw" style="background:#404040"></div></div>
<div class="row" style="top:38px"><div class="cb"></div><div class="sw" style="background:repeating-conic-gradient(#70f070 0 25%,#007800 0 50%) 0 0/2px 2px"></div></div>
<div class="row" style="top:57px"><div class="cb"></div><div class="sw" style="background:#ff0000"></div></div>
<div class="row" style="top:76px"><div class="cb"></div><div class="sw" style="background:repeating-conic-gradient(#ffa050 0 25%,#f8d090 0 50%) 0 0/2px 2px"></div></div>
<div class="row" style="top:95px"><div class="cb"></div><div class="sw" style="background:#80f0ff"></div></div>
<div class="row" style="top:114px"><div class="cb"></div><div class="sw" style="background:repeating-conic-gradient(#404040 0 25%,#383850 0 50%) 0 0/2px 2px"></div></div>
<div class="row" style="top:133px"><div class="cb"></div><div class="sw" style="background:repeating-conic-gradient(#70f070 0 25%,#007800 0 50%) 0 0/2px 2px"></div></div>
<div class="row" style="top:152px"><div class="cb"></div><div class="sw" style="background:#ff0000"></div></div>
<div class="row" style="top:171px"><div class="cb"></div><div class="sw" style="background:repeating-conic-gradient(#6878c8 0 25%,#a0a8d8 0 50%) 0 0/2px 2px"></div></div>
<div class="row" style="top:190px"><div class="cb"></div><div class="sw" style="background:repeating-conic-gradient(#b84800 0 25%,#50a000 0 50%) 0 0/2px 2px"></div></div>
<div class="row" style="top:209px"><div class="cb"></div><div class="sw" style="background:repeating-conic-gradient(#ff5878 0 25%,#ffa890 0 50%) 0 0/2px 2px"></div></div>
<div class="row" style="top:228px"><div class="cb"></div><div class="sw" style="background:#f0f020"></div></div>
<div class="row" style="top:247px"><div class="cb"></div><div class="sw" style="background:#20a0ff"></div></div>
</div>
<div class="t" style="left:5.70px;top:5.99px;font-size:13.0px;color:#fff;transform:scaleX(0.8912);transform-origin:0 0">Setting:</div>
<div class="t" style="left:52.10px;top:5.57px;font-size:13.5px;color:#fff;font-weight:bold;-webkit-text-stroke:0.35px #fff;transform:scaleX(1.0124);transform-origin:0 0">Default-FuturesES-1Min</div>
<div class="t" style="left:246.50px;top:5.99px;font-size:13.0px;color:#fff;transform:scaleX(0.8791);transform-origin:0 0">Active Strategy:</div>
<div class="t" style="left:335.30px;top:5.57px;font-size:13.5px;color:#fff;font-weight:bold;-webkit-text-stroke:0.35px #fff;transform:scaleX(1.0218);transform-origin:0 0">strat-1</div>
<svg class="a" style="left:18px;top:33px" width="8" height="12"><path d="M5 2V11" stroke="#000" stroke-width="1.15"/><path d="M2.2 4.2L5.2 2" stroke="#000" stroke-width="1.1"/></svg>
<div class="t" style="left:54.00px;top:33.76px;font-size:11.5px;color:#000;transform:scaleX(0.9375);transform-origin:0 0">02</div>
<div class="t" style="left:86.00px;top:33.76px;font-size:11.5px;color:#000;transform:scaleX(0.9375);transform-origin:0 0">03</div>
<div class="t" style="left:118.00px;top:33.76px;font-size:11.5px;color:#000;transform:scaleX(0.9375);transform-origin:0 0">06</div>
<div class="t" style="left:150.00px;top:33.76px;font-size:11.5px;color:#000;transform:scaleX(0.9375);transform-origin:0 0">07</div>
<div class="t" style="left:182.00px;top:33.76px;font-size:11.5px;color:#000;transform:scaleX(0.9375);transform-origin:0 0">08</div>
<div class="t" style="left:214.00px;top:33.76px;font-size:11.5px;color:#000;transform:scaleX(0.9375);transform-origin:0 0">09</div>
<div class="t" style="left:246.00px;top:33.76px;font-size:11.5px;color:#000;transform:scaleX(0.9375);transform-origin:0 0">10</div>
<div class="t" style="left:49.10px;top:52.91px;font-size:10.5px;color:#000;transform:scaleX(0.9943);transform-origin:0 0">675</div>
<div class="t" style="left:81.00px;top:52.91px;font-size:10.5px;color:#000">1100</div>
<div class="t" style="left:113.50px;top:52.91px;font-size:10.5px;color:#000;transform:scaleX(0.9429);transform-origin:0 0">738</div>
<div class="t" style="left:145.00px;top:52.91px;font-size:10.5px;color:#f00;transform:scaleX(0.9524);transform-origin:0 0">-225</div>
<div class="t" style="left:177.00px;top:52.91px;font-size:10.5px;color:#000;transform:scaleX(0.9829);transform-origin:0 0">2013</div>
<div class="t" style="left:209.00px;top:52.91px;font-size:10.5px;color:#000;transform:scaleX(0.9714);transform-origin:0 0">450</div>
<div class="t" style="left:241.00px;top:52.91px;font-size:10.5px;color:#f00;transform:scaleX(0.9810);transform-origin:0 0">-325</div>
<div class="t" style="left:273.50px;top:52.91px;font-size:10.5px;color:#000;transform:scaleX(0.9786);transform-origin:0 0">4425</div>
<div class="t" style="left:362.30px;top:33.41px;font-size:12.5px;color:#000;transform:scaleX(0.8046);transform-origin:0 0">History</div>
<div class="t" style="left:422.90px;top:33.41px;font-size:12.5px;color:#000;transform:scaleX(0.8490);transform-origin:0 0">Trades</div>
<div class="t" style="left:479.00px;top:33.41px;font-size:12.5px;color:#000;transform:scaleX(0.8421);transform-origin:0 0">Save</div>
<div class="t" style="left:396.30px;top:57.41px;font-size:12.5px;color:#fff;transform:scaleX(0.8193);transform-origin:0 0">Strategy 1</div>
<div class="t" style="left:497.40px;top:58.21px;font-size:12.5px;color:#fff;transform:scaleX(0.8035);transform-origin:0 0">Price</div>
<div class="t" style="left:606.50px;top:29.14px;font-size:12.0px;color:#ffff00;transform:scaleX(0.8611);transform-origin:0 0">Draw Line</div>
<div class="t" style="left:667.00px;top:28.14px;font-size:12.0px;color:#fff;transform:scaleX(0.8664);transform-origin:0 0">Slope</div>
<div class="t" style="left:583.40px;top:48.11px;font-size:12.5px;color:#ffff00;transform:scaleX(0.8140);transform-origin:0 0">Simple&nbsp;&nbsp;Line</div>
<div class="t" style="left:583.40px;top:64.41px;font-size:12.5px;color:#ffff00;transform:scaleX(0.8306);transform-origin:0 0">Regression Line</div>
<div class="t" style="left:583.40px;top:89.21px;font-size:12.5px;color:#fff;transform:scaleX(0.8351);transform-origin:0 0">Draw Indexes</div>
<div class="t" style="left:758.30px;top:29.71px;font-size:12.5px;color:#fff;transform:scaleX(0.8147);transform-origin:0 0">Swing</div>
<div class="t" style="left:747.00px;top:46.84px;font-size:12.0px;color:#ff0000;transform:scaleX(0.8750);transform-origin:0 0">A</div>
<div class="t" style="left:777.60px;top:46.84px;font-size:12.0px;color:#fff;transform:scaleX(0.7250);transform-origin:0 0">B</div>
<div class="t" style="left:806.50px;top:46.84px;font-size:12.0px;color:#fff;transform:scaleX(0.8391);transform-origin:0 0">C</div>
<div class="t" style="left:735.30px;top:89.21px;font-size:12.5px;color:#fff;transform:scaleX(0.8158);transform-origin:0 0">Draw Charts</div>
<div class="t" style="left:863.00px;top:61.95px;font-size:9.5px;color:#000;transform:scaleX(0.7819);transform-origin:0 0">Zoom</div>
<div class="t" style="left:736.20px;top:109.41px;font-size:12.5px;color:#fff;transform:scaleX(0.8288);transform-origin:0 0">Previous Day Close</div>
<div class="t" style="left:736.20px;top:128.41px;font-size:12.5px;color:#fff;transform:scaleX(0.8204);transform-origin:0 0">Bollinger Band</div>
<div class="t" style="left:735.80px;top:147.41px;font-size:12.5px;color:#fff;transform:scaleX(0.8266);transform-origin:0 0">Cross Bollinger band Up</div>
<div class="t" style="left:735.80px;top:166.41px;font-size:12.5px;color:#fff;transform:scaleX(0.8266);transform-origin:0 0">Cross Bollinger band Dn</div>
<div class="t" style="left:736.20px;top:185.41px;font-size:12.5px;color:#fff;transform:scaleX(0.8235);transform-origin:0 0">Sma Bollinger Band</div>
<div class="t" style="left:736.20px;top:204.41px;font-size:12.5px;color:#fff;transform:scaleX(0.8485);transform-origin:0 0">VWAP</div>
<div class="t" style="left:736.20px;top:223.41px;font-size:12.5px;color:#fff;transform:scaleX(0.8547);transform-origin:0 0">VWAP Band</div>
<div class="t" style="left:735.80px;top:242.41px;font-size:12.5px;color:#fff;transform:scaleX(0.8472);transform-origin:0 0">Cross VWAP band Up</div>
<div class="t" style="left:735.80px;top:261.41px;font-size:12.5px;color:#fff;transform:scaleX(0.8472);transform-origin:0 0">Cross VWAP band Dn</div>
<div class="t" style="left:736.20px;top:280.41px;font-size:12.5px;color:#fff;transform:scaleX(0.8142);transform-origin:0 0">MACDshort</div>
<div class="t" style="left:736.20px;top:299.41px;font-size:12.5px;color:#fff;transform:scaleX(0.8262);transform-origin:0 0">MACDlong</div>
<div class="t" style="left:736.20px;top:318.41px;font-size:12.5px;color:#fff;transform:scaleX(0.8359);transform-origin:0 0">Sma10</div>
<div class="t" style="left:736.20px;top:337.41px;font-size:12.5px;color:#fff;transform:scaleX(0.8359);transform-origin:0 0">Sma60</div>
<div class="t" style="left:736.20px;top:356.41px;font-size:12.5px;color:#fff;transform:scaleX(0.8305);transform-origin:0 0">Sma200</div>
<svg class="a" style="left:852.3px;top:148.9px" width="10" height="9"><path d="M0 8.5L4.5 0L9 8.5Z" fill="#fff"/></svg>
<svg class="a" style="left:852.3px;top:167.9px" width="10" height="9"><path d="M0 0L4.5 8.5L9 0Z" fill="#fff"/></svg>
<svg class="a" style="left:844.4px;top:243.9px" width="10" height="9"><path d="M0 8.5L4.5 0L9 8.5Z" fill="#fff"/></svg>
<svg class="a" style="left:844.4px;top:262.9px" width="10" height="9"><path d="M0 0L4.5 8.5L9 0Z" fill="#fff"/></svg>
<div class="t" style="left:2.50px;top:478.68px;font-size:11.0px;color:#fff;transform:scaleX(0.8607);transform-origin:0 0">18</div>
<div class="t" style="left:55.70px;top:478.68px;font-size:11.0px;color:#fff;transform:scaleX(0.9836);transform-origin:0 0">19</div>
<div class="t" style="left:115.70px;top:478.68px;font-size:11.0px;color:#fff;transform:scaleX(0.9836);transform-origin:0 0">20</div>
<div class="t" style="left:175.70px;top:478.68px;font-size:11.0px;color:#fff;transform:scaleX(0.9836);transform-origin:0 0">21</div>
<div class="t" style="left:235.70px;top:478.68px;font-size:11.0px;color:#fff;transform:scaleX(0.9836);transform-origin:0 0">22</div>
<div class="t" style="left:295.70px;top:478.68px;font-size:11.0px;color:#fff;transform:scaleX(0.9836);transform-origin:0 0">23</div>
<div class="t" style="left:357.50px;top:478.68px;font-size:11.0px;color:#fff;transform:scaleX(0.9836);transform-origin:0 0">00</div>
<div class="t" style="left:417.50px;top:478.68px;font-size:11.0px;color:#fff;transform:scaleX(0.9836);transform-origin:0 0">01</div>
<div class="t" style="left:477.50px;top:478.68px;font-size:11.0px;color:#fff;transform:scaleX(0.9836);transform-origin:0 0">02</div>
<div class="t" style="left:537.50px;top:478.68px;font-size:11.0px;color:#fff;transform:scaleX(0.9836);transform-origin:0 0">03</div>
<div class="t" style="left:597.50px;top:478.68px;font-size:11.0px;color:#fff;transform:scaleX(0.9836);transform-origin:0 0">04</div>
<div class="t" style="left:657.50px;top:478.68px;font-size:11.0px;color:#fff;transform:scaleX(0.9836);transform-origin:0 0">05</div>
<div class="t" style="left:717.50px;top:478.68px;font-size:11.0px;color:#fff;transform:scaleX(0.9836);transform-origin:0 0">06</div>
<div class="t" style="left:777.50px;top:478.68px;font-size:11.0px;color:#fff;transform:scaleX(0.9836);transform-origin:0 0">07</div>
<div class="t" style="left:837.50px;top:478.68px;font-size:11.0px;color:#fff;transform:scaleX(0.9836);transform-origin:0 0">08</div>
<div class="t" style="left:879.40px;top:138.00px;font-size:11.0px;color:#fff;transform:scaleX(0.9633);transform-origin:0 0">3254</div>
<div class="t" style="left:879.40px;top:188.28px;font-size:11.0px;color:#fff;transform:scaleX(0.9633);transform-origin:0 0">3251</div>
<div class="t" style="left:879.40px;top:238.56px;font-size:11.0px;color:#fff;transform:scaleX(0.9633);transform-origin:0 0">3248</div>
<div class="t" style="left:879.40px;top:288.84px;font-size:11.0px;color:#fff;transform:scaleX(0.9633);transform-origin:0 0">3245</div>
<div class="t" style="left:879.40px;top:339.12px;font-size:11.0px;color:#fff;transform:scaleX(0.9633);transform-origin:0 0">3242</div>
<div class="t" style="left:879.40px;top:389.40px;font-size:11.0px;color:#fff;transform:scaleX(0.9633);transform-origin:0 0">3239</div>
<div class="t" style="left:879.40px;top:439.68px;font-size:11.0px;color:#fff;transform:scaleX(0.9633);transform-origin:0 0">3236</div>
</body></html>
